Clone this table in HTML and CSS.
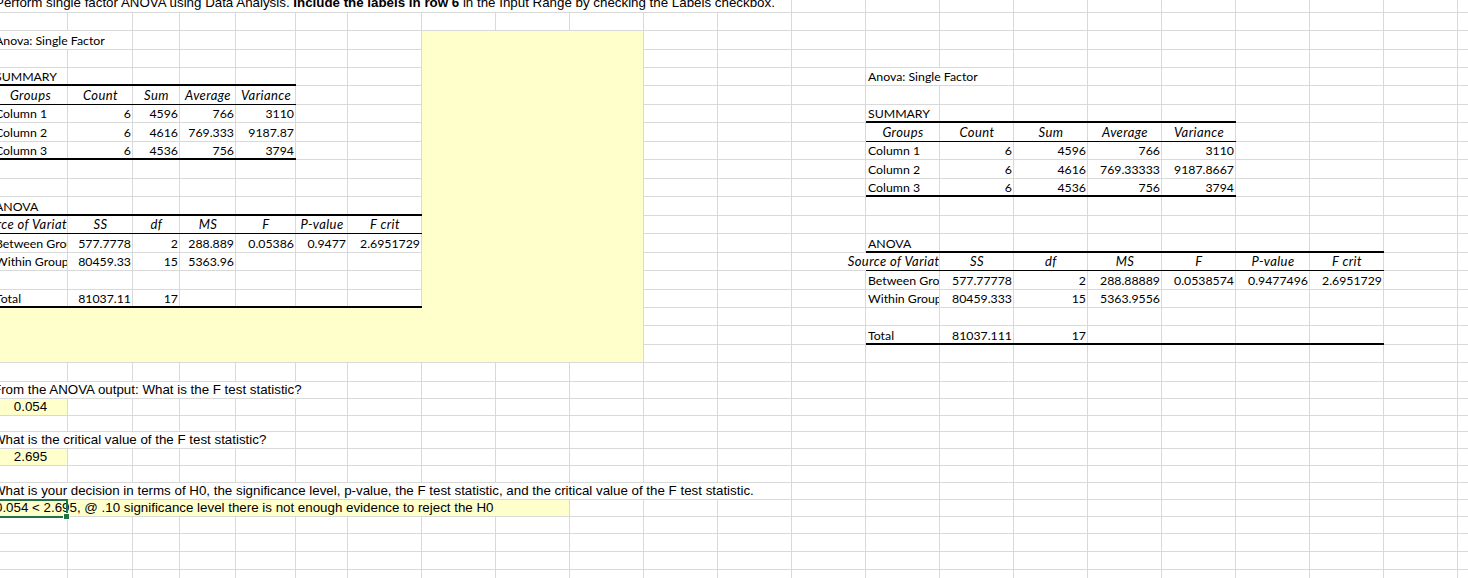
FILE: index.html
```html
<!DOCTYPE html>
<html lang="en">
<head>
<meta charset="utf-8">
<title>Anova: Single Factor</title>
<link rel="stylesheet" href="styles.css">
</head>
<body>
<div class="sheet">
<table class="grid">
<colgroup>
<col class="w75"><col class="w65"><col class="w47"><col class="w56"><col class="w60"><col class="w52">
<col span="16" class="w74">
</colgroup>
<tbody>
<tr class="h19"><td class="ar nr title">Perform single factor ANOVA using Data Analysis. <b>Include the labels in row 6</b> in the Input Range by checking the Labels checkbox.</td><td class="nr"></td><td class="nr"></td><td class="nr"></td><td class="nr"></td><td class="nr"></td><td class="nr"></td><td class="nr"></td><td class="nr"></td><td class="nr"></td><td class="nr"></td><td></td><td></td><td></td><td></td><td></td><td></td><td></td><td></td><td></td><td></td><td></td></tr>
<tr class="h18"><td></td><td></td><td></td><td></td><td></td><td></td><td></td><td></td><td></td><td></td><td></td><td></td><td></td><td></td><td></td><td></td><td></td><td></td><td></td><td></td><td></td><td></td></tr>
<tr class="h19"><td class="nr">Anova: Single Factor</td><td></td><td></td><td></td><td></td><td></td><td></td><td class="y"></td><td class="y"></td><td class="yr"></td><td></td><td></td><td></td><td></td><td></td><td></td><td></td><td></td><td></td><td></td><td></td><td></td></tr>
<tr class="h18"><td></td><td></td><td></td><td></td><td></td><td></td><td></td><td class="y"></td><td class="y"></td><td class="yr"></td><td></td><td></td><td></td><td></td><td></td><td></td><td></td><td></td><td></td><td></td><td></td><td></td></tr>
<tr class="h18"><td class="tb">SUMMARY</td><td class="tb"></td><td class="tb"></td><td class="tb"></td><td class="tb"></td><td></td><td></td><td class="y"></td><td class="y"></td><td class="yr"></td><td></td><td></td><td></td><td class="nr">Anova: Single Factor</td><td></td><td></td><td></td><td></td><td></td><td></td><td></td><td></td></tr>
<tr class="h19"><td class="hb c i">Groups</td><td class="hb c i">Count</td><td class="hb c i">Sum</td><td class="hb c i">Average</td><td class="hb c i">Variance</td><td></td><td></td><td class="y"></td><td class="y"></td><td class="yr"></td><td></td><td></td><td></td><td></td><td></td><td></td><td></td><td></td><td></td><td></td><td></td><td></td></tr>
<tr class="h18"><td>Column 1</td><td class="r">6</td><td class="r">4596</td><td class="r">766</td><td class="r">3110</td><td></td><td></td><td class="y"></td><td class="y"></td><td class="yr"></td><td></td><td></td><td></td><td class="tb">SUMMARY</td><td class="tb"></td><td class="tb"></td><td class="tb"></td><td class="tb"></td><td></td><td></td><td></td><td></td></tr>
<tr class="h19"><td>Column 2</td><td class="r">6</td><td class="r">4616</td><td class="r">769.333</td><td class="r">9187.87</td><td></td><td></td><td class="y"></td><td class="y"></td><td class="yr"></td><td></td><td></td><td></td><td class="hb c i">Groups</td><td class="hb c i">Count</td><td class="hb c i">Sum</td><td class="hb c i">Average</td><td class="hb c i">Variance</td><td></td><td></td><td></td><td></td></tr>
<tr class="h18"><td class="tb">Column 3</td><td class="tb r">6</td><td class="tb r">4536</td><td class="tb r">756</td><td class="tb r">3794</td><td></td><td></td><td class="y"></td><td class="y"></td><td class="yr"></td><td></td><td></td><td></td><td>Column 1</td><td class="r">6</td><td class="r">4596</td><td class="r">766</td><td class="r">3110</td><td></td><td></td><td></td><td></td></tr>
<tr class="h19"><td></td><td></td><td></td><td></td><td></td><td></td><td></td><td class="y"></td><td class="y"></td><td class="yr"></td><td></td><td></td><td></td><td>Column 2</td><td class="r">6</td><td class="r">4616</td><td class="r">769.33333</td><td class="r">9187.8667</td><td></td><td></td><td></td><td></td></tr>
<tr class="h18"><td></td><td></td><td></td><td></td><td></td><td></td><td></td><td class="y"></td><td class="y"></td><td class="yr"></td><td></td><td></td><td></td><td class="tb">Column 3</td><td class="tb r">6</td><td class="tb r">4536</td><td class="tb r">756</td><td class="tb r">3794</td><td></td><td></td><td></td><td></td></tr>
<tr class="h19"><td class="tb">ANOVA</td><td class="tb"></td><td class="tb"></td><td class="tb"></td><td class="tb"></td><td class="tb"></td><td class="tb"></td><td class="y"></td><td class="y"></td><td class="yr"></td><td></td><td></td><td></td><td></td><td></td><td></td><td></td><td></td><td></td><td></td><td></td><td></td></tr>
<tr class="h18"><td class="hb i cc"><div><span>Source of Variation</span></div></td><td class="hb c i">SS</td><td class="hb c i">df</td><td class="hb c i">MS</td><td class="hb c i">F</td><td class="hb c i">P-value</td><td class="hb c i">F crit</td><td class="y"></td><td class="y"></td><td class="yr"></td><td></td><td></td><td></td><td></td><td></td><td></td><td></td><td></td><td></td><td></td><td></td><td></td></tr>
<tr class="h19"><td class="clip"><div>Between Groups</div></td><td class="r">577.7778</td><td class="r">2</td><td class="r">288.889</td><td class="r">0.05386</td><td class="r">0.9477</td><td class="r">2.6951729</td><td class="y"></td><td class="y"></td><td class="yr"></td><td></td><td></td><td></td><td class="tb">ANOVA</td><td class="tb"></td><td class="tb"></td><td class="tb"></td><td class="tb"></td><td class="tb"></td><td class="tb"></td><td></td><td></td></tr>
<tr class="h18"><td class="clip"><div>Within Groups</div></td><td class="r">80459.33</td><td class="r">15</td><td class="r">5363.96</td><td></td><td></td><td></td><td class="y"></td><td class="y"></td><td class="yr"></td><td></td><td></td><td class="nr"></td><td class="hb i cc"><div><span>Source of Variation</span></div></td><td class="hb c i">SS</td><td class="hb c i">df</td><td class="hb c i">MS</td><td class="hb c i">F</td><td class="hb c i">P-value</td><td class="hb c i">F crit</td><td></td><td></td></tr>
<tr class="h19"><td></td><td></td><td></td><td></td><td></td><td></td><td></td><td class="y"></td><td class="y"></td><td class="yr"></td><td></td><td></td><td></td><td class="clip"><div>Between Groups</div></td><td class="r">577.77778</td><td class="r">2</td><td class="r">288.88889</td><td class="r">0.0538574</td><td class="r">0.9477496</td><td class="r">2.6951729</td><td></td><td></td></tr>
<tr class="h18"><td class="tb">Total</td><td class="tb r">81037.11</td><td class="tb r">17</td><td class="tb"></td><td class="tb"></td><td class="tb"></td><td class="tb"></td><td class="y"></td><td class="y"></td><td class="yr"></td><td></td><td></td><td></td><td class="clip"><div>Within Groups</div></td><td class="r">80459.333</td><td class="r">15</td><td class="r">5363.9556</td><td></td><td></td><td></td><td></td><td></td></tr>
<tr class="h18"><td class="y"></td><td class="y"></td><td class="y"></td><td class="y"></td><td class="y"></td><td class="y"></td><td class="y"></td><td class="y"></td><td class="y"></td><td class="yr"></td><td></td><td></td><td></td><td></td><td></td><td></td><td></td><td></td><td></td><td></td><td></td><td></td></tr>
<tr class="h19"><td class="y"></td><td class="y"></td><td class="y"></td><td class="y"></td><td class="y"></td><td class="y"></td><td class="y"></td><td class="y"></td><td class="y"></td><td class="yr"></td><td></td><td></td><td></td><td class="tb">Total</td><td class="tb r">81037.111</td><td class="tb r">17</td><td class="tb"></td><td class="tb"></td><td class="tb"></td><td class="tb"></td><td></td><td></td></tr>
<tr class="h18"><td class="yb"></td><td class="yb"></td><td class="yb"></td><td class="yb"></td><td class="yb"></td><td class="yb"></td><td class="yb"></td><td class="yb"></td><td class="yb"></td><td class="ybr"></td><td></td><td></td><td></td><td></td><td></td><td></td><td></td><td></td><td></td><td></td><td></td><td></td></tr>
<tr class="h19"><td></td><td></td><td></td><td></td><td></td><td></td><td></td><td></td><td></td><td></td><td></td><td></td><td></td><td></td><td></td><td></td><td></td><td></td><td></td><td></td><td></td><td></td></tr>
<tr class="h17"><td class="ar nr q">From the ANOVA output: What is the F test statistic?</td><td class="nr"></td><td class="nr"></td><td class="nr"></td><td class="nr"></td><td></td><td></td><td></td><td></td><td></td><td></td><td></td><td></td><td></td><td></td><td></td><td></td><td></td><td></td><td></td><td></td><td></td></tr>
<tr class="h17"><td class="ybr ar c">0.054</td><td></td><td></td><td></td><td></td><td></td><td></td><td></td><td></td><td></td><td></td><td></td><td></td><td></td><td></td><td></td><td></td><td></td><td></td><td></td><td></td><td></td></tr>
<tr class="h16"><td></td><td></td><td></td><td></td><td></td><td></td><td></td><td></td><td></td><td></td><td></td><td></td><td></td><td></td><td></td><td></td><td></td><td></td><td></td><td></td><td></td><td></td></tr>
<tr class="h17"><td class="ar nr q">What is the critical value of the F test statistic?</td><td class="nr"></td><td class="nr"></td><td class="nr"></td><td></td><td></td><td></td><td></td><td></td><td></td><td></td><td></td><td></td><td></td><td></td><td></td><td></td><td></td><td></td><td></td><td></td><td></td></tr>
<tr class="h17"><td class="ybr ar c">2.695</td><td></td><td></td><td></td><td></td><td></td><td></td><td></td><td></td><td></td><td></td><td></td><td></td><td></td><td></td><td></td><td></td><td></td><td></td><td></td><td></td><td></td></tr>
<tr class="h17"><td></td><td></td><td></td><td></td><td></td><td></td><td></td><td></td><td></td><td></td><td></td><td></td><td></td><td></td><td></td><td></td><td></td><td></td><td></td><td></td><td></td><td></td></tr>
<tr class="h17"><td class="ar nr q">What is your decision in terms of H0, the significance level, p-value, the F test statistic, and the critical value of the F test statistic.</td><td class="nr"></td><td class="nr"></td><td class="nr"></td><td class="nr"></td><td class="nr"></td><td class="nr"></td><td class="nr"></td><td class="nr"></td><td class="nr"></td><td class="nr"></td><td></td><td></td><td></td><td></td><td></td><td></td><td></td><td></td><td></td><td></td><td></td></tr>
<tr class="h17"><td class="yb ar sel">0.054 &lt; 2.695, @ .10 significance level there is not enough evidence to reject the H0<span class="selbox"></span><span class="handle"></span></td><td class="yb"></td><td class="yb"></td><td class="yb"></td><td class="yb"></td><td class="yb"></td><td class="yb"></td><td class="yb"></td><td class="ybr"></td><td></td><td></td><td></td><td></td><td></td><td></td><td></td><td></td><td></td><td></td><td></td><td></td><td></td></tr>
<tr class="h17"><td></td><td></td><td></td><td></td><td></td><td></td><td></td><td></td><td></td><td></td><td></td><td></td><td></td><td></td><td></td><td></td><td></td><td></td><td></td><td></td><td></td><td></td></tr>
<tr class="h18"><td></td><td></td><td></td><td></td><td></td><td></td><td></td><td></td><td></td><td></td><td></td><td></td><td></td><td></td><td></td><td></td><td></td><td></td><td></td><td></td><td></td><td></td></tr>
<tr class="h18"><td></td><td></td><td></td><td></td><td></td><td></td><td></td><td></td><td></td><td></td><td></td><td></td><td></td><td></td><td></td><td></td><td></td><td></td><td></td><td></td><td></td><td></td></tr>
<tr class="h18"><td></td><td></td><td></td><td></td><td></td><td></td><td></td><td></td><td></td><td></td><td></td><td></td><td></td><td></td><td></td><td></td><td></td><td></td><td></td><td></td><td></td><td></td></tr>
</tbody>
</table>
</div>
</body>
</html>
```
FILE: styles.css
```css
html, body {
  margin: 0;
  padding: 0;
  background: #ffffff;
}

.sheet {
  width: 1468px;
  height: 578px;
  overflow: hidden;
}

.grid {
  border-collapse: separate;
  border-spacing: 0;
  table-layout: fixed;
  width: 1539px;
  margin: -6px 0 0 -7px;
  font-family: Lato, "Open Sans", sans-serif;
  font-size: 12.3px;
  color: #000000;
}

.w75 { width: 75px; }
.w65 { width: 65px; }
.w47 { width: 47px; }
.w56 { width: 56px; }
.w60 { width: 60px; }
.w52 { width: 52px; }
.w74 { width: 74px; }

.h16 { height: 16px; }
.h17 { height: 17px; }
.h18 { height: 18px; }
.h19 { height: 19px; }

.grid td {
  padding: 0 2px 2px 2px;
  line-height: 15px;
  white-space: nowrap;
  vertical-align: bottom;
  overflow: visible;
  box-shadow: inset -1px -1px 0 #d9d9d9;
}

.grid td.nr { box-shadow: inset 0 -1px 0 #d9d9d9; }

.grid td.tb { box-shadow: inset 0 -2px 0 #000000, inset -1px 0 0 #d9d9d9; }
.grid td.hb { box-shadow: inset 0 -1px 0 #000000, inset -1px 0 0 #d9d9d9; }

.grid td.y { background: #ffffcc; box-shadow: none; }
.grid td.yr { background: #ffffcc; box-shadow: inset -1px 0 0 #d9d9d9; }
.grid td.yb { background: #ffffcc; box-shadow: inset 0 -1px 0 #d9d9d9; }
.grid td.ybr { background: #ffffcc; }

.grid td.r { text-align: right; }
.grid td.c { text-align: center; }
.grid td.i {
  font-style: italic;
  font-size: 13px;
  letter-spacing: 0.4px;
}

.grid td.ar {
  font-family: "Liberation Sans", Arial, sans-serif;
  font-size: 13.33px;
  letter-spacing: 0;
}

.grid td.title { padding-bottom: 3px; }
.grid td.q { text-indent: -2px; }

.grid td.clip { padding-right: 1px; }
.clip div { overflow: hidden; }

.grid td.cc { padding: 0 1px 2px 0; }
.cc div {
  display: flex;
  justify-content: center;
  clip-path: inset(-4px 0 -4px -300px);
}

.grid td.sel { position: relative; }

.selbox {
  position: absolute;
  left: -2px;
  top: -1px;
  right: 0;
  bottom: -1px;
  border: 2px solid #217346;
}

.handle {
  position: absolute;
  width: 5px;
  height: 5px;
  right: -1px;
  bottom: -2px;
  background: #217346;
  box-shadow: 0 0 0 1px #ffffff;
}
```
